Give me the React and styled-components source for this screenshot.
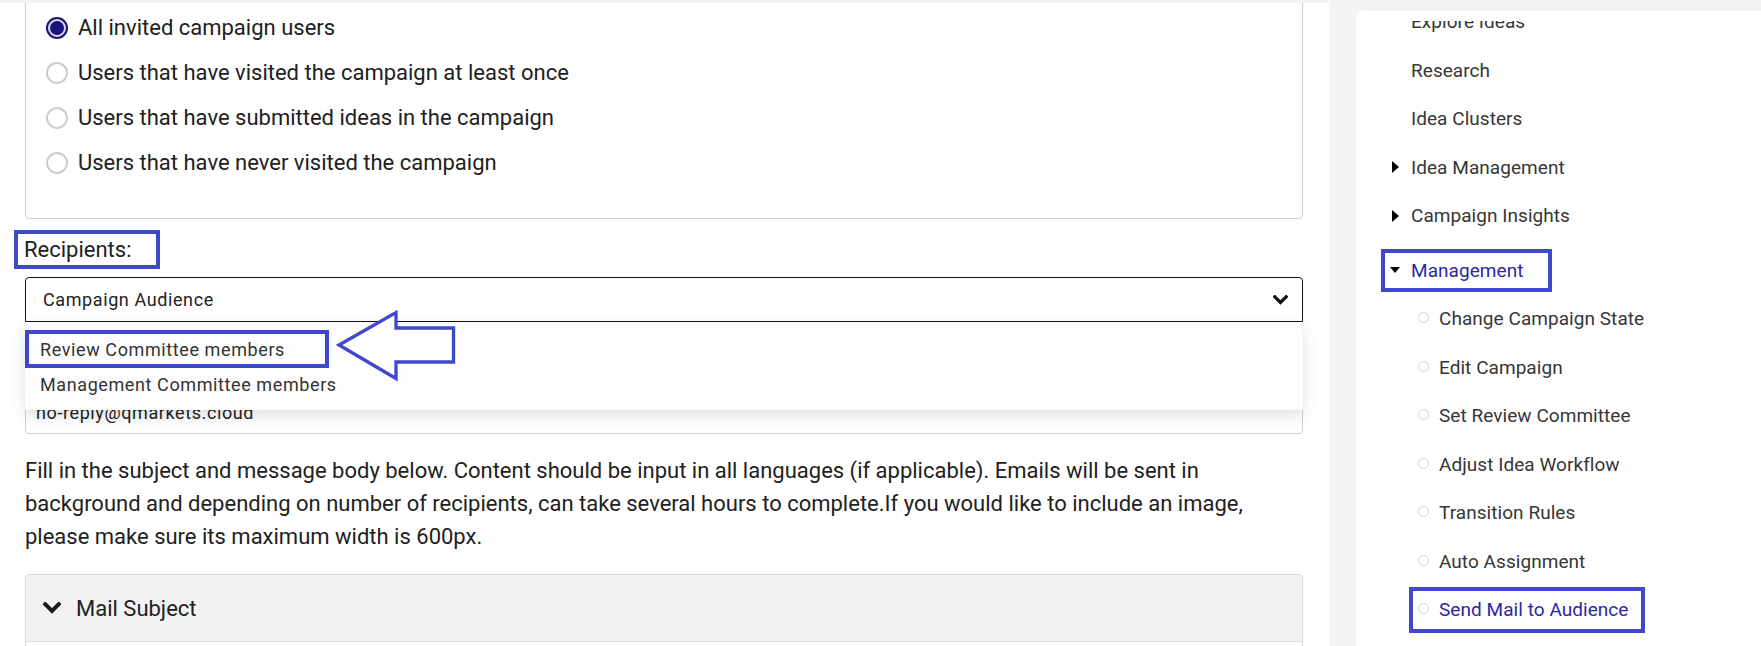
import React from "react";
import styled, { createGlobalStyle, css } from "styled-components";

const Global = createGlobalStyle`
  html, body, #root { margin: 0; padding: 0; height: 100%; }
  body {
    background: #f4f4f4;
    font-family: Roboto, "Liberation Sans", Arial, sans-serif;
    overflow: hidden;
  }
  * { box-sizing: border-box; }
`;

const MARK = "#3f48cc";
const NAVY = "#17157c";
const ACTIVE = "#2c27a3";

const Page = styled.div`
  display: flex;
  height: 100vh;
  overflow: hidden;
  background: #f4f4f4;
`;

const Main = styled.main`
  width: 1329px;
  flex: none;
  margin-top: 3px;
  background: #fff;
  padding: 0 26px 0 25px;
  overflow: hidden;
  display: flex;
  flex-direction: column;
`;

const Card = styled.div`
  flex: none;
  margin-top: -10px;
  border: 1px solid #cfcfcf;
  border-radius: 4px;
  padding: 11px 0 33px 20px;
`;

const RadioRow = styled.label`
  display: flex;
  align-items: center;
  gap: 10px;
  height: 45px;
  font-size: 22px;
  color: #212121;
`;

const RadioDot = styled.span`
  position: relative;
  flex: none;
  width: 22px;
  height: 22px;
  border-radius: 50%;
  border: 2px solid ${(p) => (p.$checked ? NAVY : "#cdcdcd")};
  background: ${(p) => (p.$checked ? "#d9d9de" : "#fff")};
  ${(p) =>
    p.$checked &&
    css`
      &::after {
        content: "";
        position: absolute;
        inset: 2px;
        border-radius: 50%;
        background: ${NAVY};
      }
    `}
`;

const MarkedLabel = styled.div`
  align-self: flex-start;
  margin: 11px 0 0 -11px;
  border: 4px solid ${MARK};
  padding: 0 24px 0 6px;
  font-size: 22px;
  line-height: 31px;
  color: #212121;
`;

const SelectWrap = styled.div`
  position: relative;
  flex: none;
  margin-top: 8px;
`;

const SelectBox = styled.div`
  height: 45px;
  border: 1px solid #111;
  border-radius: 4px 4px 0 0;
  display: flex;
  align-items: center;
  justify-content: space-between;
  padding: 0 14px 0 17px;
  font-size: 18px;
  letter-spacing: 0.6px;
  color: #222;
  background: #fff;
`;

const Chevron = styled.svg`
  flex: none;
  display: block;
`;

const Menu = styled.ul`
  position: absolute;
  left: 0;
  right: 0;
  top: 100%;
  margin: 0;
  padding: 8px 0 10px;
  list-style: none;
  background: #fdfdfd;
  box-shadow: 0 6px 14px rgba(0, 0, 0, 0.12);
  z-index: 2;
`;

const MenuItem = styled.li`
  display: flex;
  align-items: center;
  font-size: 18px;
  letter-spacing: 0.6px;
  color: #333;
  ${(p) =>
    p.$marked
      ? css`
          width: fit-content;
          height: 38px;
          border: 4px solid ${MARK};
          padding: 0 40px 0 11px;
        `
      : css`
          height: 32px;
          padding-left: 15px;
        `}
`;

const ArrowMark = styled.svg`
  position: absolute;
  left: 310px;
  top: -14px;
  overflow: visible;
`;

const SenderField = styled.div`
  flex: none;
  margin-top: 68px;
  height: 44px;
  border: 1px solid #cfcfcf;
  border-radius: 4px;
  padding-left: 10px;
  display: flex;
  align-items: center;
  font-size: 18px;
  letter-spacing: 0.6px;
  color: #222;
`;

const Intro = styled.p`
  flex: none;
  margin: 19.5px 0 0;
  font-size: 22px;
  line-height: 33px;
  color: #212121;
`;

const Panel = styled.section`
  flex: none;
  margin-top: 21.5px;
  border: 1px solid #d6d6d6;
  border-radius: 4px 4px 0 0;
`;

const PanelHeader = styled.div`
  height: 67px;
  background: #f2f2f2;
  border-bottom: 1px solid #e2e2e2;
  display: flex;
  align-items: center;
  gap: 15px;
  padding-left: 17px;
  font-size: 22px;
  color: #212121;
  border-radius: 4px 4px 0 0;
`;

const PanelBody = styled.div`
  height: 120px;
  background: #fff;
`;

const Sidebar = styled.aside`
  flex: 1;
  margin: 11px 0 0 27px;
  padding-top: 9.5px;
  background: #fff;
  border-top-left-radius: 8px;
  overflow: hidden;
  display: flex;
  flex-direction: column;
`;

const NavScroll = styled.div`
  flex: 1;
  overflow: hidden;
`;

const NavList = styled.ul`
  margin: -23.25px 0 0;
  padding: 0;
  list-style: none;
`;

const NavItem = styled.li`
  height: 48.5px;
  display: flex;
  align-items: center;
  padding-left: ${(p) => (p.$sub ? 53 : 25)}px;
  margin-top: ${(p) => (p.$spaced ? 6 : 0)}px;
  font-size: 19px;
  letter-spacing: 0.05px;
  color: ${(p) => (p.$active ? ACTIVE : "#363636")};
`;

const NavInner = styled.span`
  display: inline-flex;
  align-items: center;
  height: ${(p) => (p.$sub ? 46 : 43)}px;
  border: 4px solid ${(p) => (p.$marked ? MARK : "transparent")};
  padding-right: ${(p) => p.$padRight || 0}px;
`;

const CaretSlot = styled.span`
  flex: none;
  width: 20px;
  margin-right: 6px;
  display: flex;
  justify-content: center;
  align-items: center;
`;

const Caret = styled.span`
  width: 0;
  height: 0;
  ${(p) =>
    p.$open
      ? css`
          border-top: 6.5px solid #000;
          border-left: 5.5px solid transparent;
          border-right: 5.5px solid transparent;
        `
      : css`
          border-left: 7px solid #000;
          border-top: 6px solid transparent;
          border-bottom: 6px solid transparent;
        `}
`;

const SubDot = styled.span`
  flex: none;
  width: 11px;
  height: 11px;
  margin: -2px 10px 0 5px;
  border-radius: 50%;
  border: 1px solid #d2d2d2;
  background: #fff;
`;

function ChevronDown({ w, color = "#111" }) {
  const h = Math.round(w * 0.66);
  return (
    <Chevron width={w} height={h} viewBox="0 0 18 12">
      <polyline
        points="2.2,2.2 9,9 15.8,2.2"
        fill="none"
        stroke={color}
        strokeWidth="4"
        strokeLinecap="square"
        strokeLinejoin="miter"
      />
    </Chevron>
  );
}

const radios = [
  { label: "All invited campaign users", checked: true },
  { label: "Users that have visited the campaign at least once" },
  { label: "Users that have submitted ideas in the campaign" },
  { label: "Users that have never visited the campaign" },
];

const topNav = [
  { label: "Explore Ideas" },
  { label: "Research" },
  { label: "Idea Clusters" },
  { label: "Idea Management", caret: "closed" },
  { label: "Campaign Insights", caret: "closed" },
];

const subNav = [
  "Change Campaign State",
  "Edit Campaign",
  "Set Review Committee",
  "Adjust Idea Workflow",
  "Transition Rules",
  "Auto Assignment",
];

export default function App() {
  return (
    <>
      <Global />
      <Page>
        <Main>
          <Card>
            {radios.map((r) => (
              <RadioRow key={r.label}>
                <RadioDot $checked={r.checked} />
                {r.label}
              </RadioRow>
            ))}
          </Card>

          <MarkedLabel>Recipients:</MarkedLabel>

          <SelectWrap>
            <SelectBox>
              <span>Campaign Audience</span>
              <ChevronDown w={15} color="#111" />
            </SelectBox>
            <Menu>
              <MenuItem $marked>Review Committee members</MenuItem>
              <MenuItem>Management Committee members</MenuItem>
              <ArrowMark width="124" height="76" viewBox="0 0 124 76">
                <polygon
                  points="4,37 61,4.5 61,20 118.5,20 118.5,54 61,54 61,70.5"
                  fill="#fff"
                  stroke={MARK}
                  strokeWidth="3.3"
                  strokeLinejoin="miter"
                />
              </ArrowMark>
            </Menu>
          </SelectWrap>

          <SenderField>no-reply@qmarkets.cloud</SenderField>

          <Intro>
            Fill in the subject and message body below. Content should be input in all languages (if
            applicable). Emails will be sent in background and depending on number of recipients, can
            take several hours to complete.If you would like to include an image, please make sure its
            maximum width is 600px.
          </Intro>

          <Panel>
            <PanelHeader>
              <ChevronDown w={18} color="#1c1c1c" />
              <span>Mail Subject</span>
            </PanelHeader>
            <PanelBody />
          </Panel>
        </Main>

        <Sidebar>
          <NavScroll>
            <NavList>
              {topNav.map((n) => (
                <NavItem key={n.label}>
                  <NavInner>
                    <CaretSlot>{n.caret && <Caret />}</CaretSlot>
                    {n.label}
                  </NavInner>
                </NavItem>
              ))}
              <NavItem $spaced $active>
                <NavInner $marked $padRight={25}>
                  <CaretSlot>
                    <Caret $open />
                  </CaretSlot>
                  Management
                </NavInner>
              </NavItem>
              {subNav.map((s) => (
                <NavItem key={s} $sub>
                  <NavInner $sub>
                    <SubDot />
                    {s}
                  </NavInner>
                </NavItem>
              ))}
              <NavItem $sub $active>
                <NavInner $sub $marked $padRight={13}>
                  <SubDot />
                  Send Mail to Audience
                </NavInner>
              </NavItem>
            </NavList>
          </NavScroll>
        </Sidebar>
      </Page>
    </>
  );
}
